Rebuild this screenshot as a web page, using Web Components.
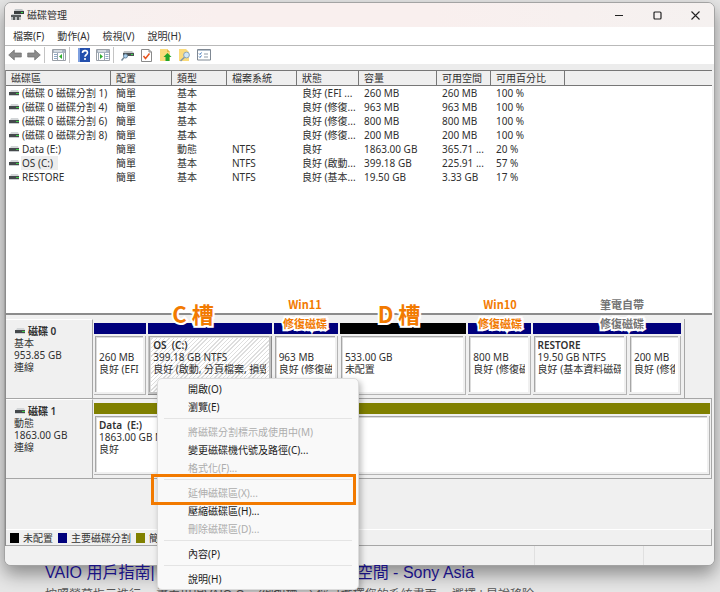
<!DOCTYPE html>
<html lang="zh-Hant">
<head>
<meta charset="utf-8">
<title>磁碟管理</title>
<style>
html, body { margin: 0; height: 100%; }
body {
  background: #e6e6e6;
  overflow: hidden;
  color: #303030;
  font: 10px/12px "Noto Sans", "Noto Sans CJK TC", sans-serif;
  --line: #8c8c8c;
  --soft: #a6a6a6;
  --face: #f0f0f0;
  --navy: #00007c;
  --olive: #808000;
  --mark: #f27a00;
}
</style>
</head>
<body>
<disk-desktop></disk-desktop>

<script>
const define = (name, html, setup) => {
  const template = document.createElement('template');
  template.innerHTML = html;
  customElements.define(name, class extends HTMLElement {
    constructor() {
      super();
      this.attachShadow({ mode: 'open' }).append(template.content.cloneNode(true));
    }
    connectedCallback() { if (setup) setup(this, this.shadowRoot); }
  });
};

/* Small drive glyph used in lists and labels */
define('drive-icon', `
<style>:host{display:inline-block;width:11px;height:6px;flex:none}svg{display:block}</style>
<svg width="11" height="6" viewBox="0 0 11 6" aria-hidden="true">
  <path d="M2 0h7l1 2H1z" fill="#d3d6d8"/><path d="M0 2h10v3H0z" fill="#45494c"/>
  <path d="M0 5h10v1H0z" fill="#c9cdcf"/><path d="M7 3h3v1H7z" fill="#3fc94a"/>
</svg>`);

define('title-bar', `
<style>
:host{display:flex;align-items:center;height:24px;background:linear-gradient(90deg,#f5f1f0,#f9efee 30%,#f9efee 60%,#f5f1f0);padding-left:6px}
h1{margin:0;font:inherit;flex:1;padding-left:3px}
button{width:38px;height:24px;padding:0;border:0;background:none;display:grid;place-items:center;color:#222}
</style>
<svg width="13" height="12" viewBox="0 0 13 12" aria-hidden="true">
  <path d="M4 0h7l2 2H3z" fill="#c3c7c9"/><path d="M3 2h10v3H3z" fill="#3a3e40"/><path d="M10 3h2v1h-2z" fill="#3ddc4a"/>
  <path d="M1 5h8l1 1H0z" fill="#c3c7c9"/><path d="M0 6h10v2H0z" fill="#55595b"/><path d="M0 8h10v3H0z" fill="#b9bdbf"/><path d="M2 8h2v3H2zM6 8h2v3H6z" fill="#55595b"/>
</svg>
<h1>磁碟管理</h1>
<button aria-label="最小化"><svg width="9" height="9"><path d="M0 4.5h8" stroke="currentColor"/></svg></button>
<button aria-label="最大化"><svg width="9" height="9"><rect x="1" y="1" width="7" height="7" rx="1" fill="none" stroke="currentColor" stroke-width="1.2"/></svg></button>
<button aria-label="關閉"><svg width="9" height="9"><path d="M.5.5l8 8M8.500.5l-8 8" stroke="currentColor" stroke-width="1.1"/></svg></button>`);

define('menu-strip', `
<style>
:host{display:flex;gap:13px;align-items:center;height:18px;padding-left:8px;background:#fff;border-bottom:1px solid #b9b9b9}
button{all:unset}
</style>
<button>檔案(F)</button><button>動作(A)</button><button>檢視(V)</button><button>說明(H)</button>`);

define('tool-strip', `
<style>
:host{display:flex;align-items:center;height:18px;background:#fff;border-bottom:6px solid #ececec}
button{border:0;background:none;padding:0;width:19px;height:18px;display:grid;place-items:center}
i{width:1px;height:16px;background:#c4c4c4;margin:0 4px 0 1px}
</style>
<button aria-label="上一頁"><svg width="14" height="12"><path d="M.7 6l5.600-5v3h7v4h-7v3z" fill="#8b8b8b" stroke="#6f6f6f" stroke-width=".7"/></svg></button>
<button aria-label="下一頁"><svg width="14" height="12"><path d="M13.300 6l-5.600-5v3h-7v4h7v3z" fill="#8b8b8b" stroke="#6f6f6f" stroke-width=".7"/></svg></button>
<i></i>
<button aria-label="顯示主控台樹"><svg width="14" height="12"><path d="M.5.5h13v11H.5z" fill="#fff" stroke="#9a9fa6"/><path d="M1 1h12v3H1z" fill="#a9b5c2"/><path d="M2 2h8" stroke="#fff"/><path d="M2 5.500h3M2 7.500h3M2 9.500h3" stroke="#8fa9c6"/><path d="M5.500 4v7.500M11.500 4v7.500" stroke="#9aa5b1"/><path d="M10 5v5L7 7.500z" fill="#2fae2f"/></svg></button>
<i></i>
<button aria-label="說明"><svg width="12" height="14"><rect width="12" height="14" fill="#2450ad"/><path d="M0 0h2v14H0z" fill="#7d9fdf"/><path d="M4.500 5c0-3.200 5-3 5-.2 0 2-2.500 1.900-2.500 4" fill="none" stroke="#fff" stroke-width="1.600"/><circle cx="7" cy="11" r="1.100" fill="#fff"/></svg></button>
<button aria-label="顯示動作窗格"><svg width="14" height="12"><path d="M.5.5h13v11H.5z" fill="#fff" stroke="#9a9fa6"/><path d="M1 1h12v3H1z" fill="#a9b5c2"/><path d="M2 2h8" stroke="#fff"/><path d="M9.500 5.500h3M9.500 7.500h3M9.500 9.500h3" stroke="#8fa9c6"/><path d="M2.500 4v7.500M8.500 4v7.500" stroke="#9aa5b1"/><path d="M4 5v5l3-2.500z" fill="#2fae2f"/></svg></button>
<i></i>
<button aria-label="重新掃描"><svg width="13" height="12"><path d="M3 2h8l2 2H2z" fill="#c0c4c6"/><path d="M2 4h11v3H2z" fill="#4a5053"/><path d="M10 5h2v1h-2z" fill="#3ddc4a"/><circle cx="4.500" cy="7" r="2" fill="#a9d0ee" stroke="#6e8ba3"/><path d="M3 8.500L.5 11.500" stroke="#738797" stroke-width="1.500"/></svg></button>
<button aria-label="內容"><svg width="11" height="13"><path d="M.5.5h7.500l2.500 2.500v9.500H.5z" fill="#fff" stroke="#8a8a8a"/><path d="M8 .5V3h2.500" fill="none" stroke="#8a8a8a"/><path d="M2.500 7l2 2.500L8.500 4.500" fill="none" stroke="#e8541e" stroke-width="1.500"/></svg></button>
<button aria-label="上層"><svg width="12" height="14"><path d="M0 1h7l3 3v9H0z" fill="#fadb7c"/><path d="M7 1l3 3H7z" fill="#e2b84e"/><path d="M7.500 5l4 4h-2v4h-4V9h-2z" fill="#22a52a"/></svg></button>
<button aria-label="尋找"><svg width="13" height="14"><path d="M1 1h7l3 3v9H1z" fill="#fadb7c"/><circle cx="8.500" cy="7" r="2.900" fill="#cfe6f7" stroke="#8ba4b8"/><path d="M6.500 9.300L2.500 13" stroke="#7e97ab" stroke-width="1.500"/></svg></button>
<button aria-label="清單"><svg width="14" height="12"><path d="M.5.5h13v10.500H.5z" fill="#fff" stroke="#7f8893"/><path d="M1 1.500h12" stroke="#b4c0cd"/><path d="M2 4.500l1 1 1.500-2M2 7.500l1 1 1.500-2" fill="none" stroke="#3a72b8"/><path d="M7 5h4M7 8h4" stroke="#8f9aa6"/></svg></button>`);

define('volume-list', `
<style>
:host{display:block;background:#fff;overflow:hidden;flex:1;min-height:120px;border-bottom:2px solid var(--line)}
table{border-collapse:separate;border-spacing:0;table-layout:fixed;width:100%}
th{height:14px;padding:0 0 0 5px;border:solid #777;border-width:1px 1px 1px 0;background:#efefef;font-weight:400;text-align:left;line-height:14px}
th:last-child{border-right:0}
td{height:14px;line-height:14px;padding:0 0 0 5px;white-space:nowrap;overflow:hidden}
td:first-child{padding-left:3px}
drive-icon{margin-right:1px;vertical-align:1px}
span{padding:0 2px 0 1px}
.on{background:#ededed;padding:0 5px 0 1px}
</style>
<table>
<colgroup><col width="105"><col width="61"><col width="55"><col width="70"><col width="62"><col width="78"><col width="54"><col width="74"><col></colgroup>
<thead><tr><th>磁碟區</th><th>配置</th><th>類型</th><th>檔案系統</th><th>狀態</th><th>容量</th><th>可用空間</th><th>可用百分比</th><th></th></tr></thead>
<tbody></tbody></table>`, (host, root) => {
  const rows = [
    ['(磁碟 0 磁碟分割 1)', '簡單', '基本', '', '良好 (EFI ...', '260 MB', '260 MB', '100 %'],
    ['(磁碟 0 磁碟分割 4)', '簡單', '基本', '', '良好 (修復...', '963 MB', '963 MB', '100 %'],
    ['(磁碟 0 磁碟分割 6)', '簡單', '基本', '', '良好 (修復...', '800 MB', '800 MB', '100 %'],
    ['(磁碟 0 磁碟分割 8)', '簡單', '基本', '', '良好 (修復...', '200 MB', '200 MB', '100 %'],
    ['Data (E:)', '簡單', '動態', 'NTFS', '良好', '1863.00 GB', '365.71 ...', '20 %'],
    ['OS (C:)', '簡單', '基本', 'NTFS', '良好 (啟動...', '399.18 GB', '225.91 ...', '57 %'],
    ['RESTORE', '簡單', '基本', 'NTFS', '良好 (基本...', '19.50 GB', '3.33 GB', '17 %']
  ];
  root.querySelector('tbody').innerHTML = rows.map(r => '<tr>' + r.map((c, i) =>
    i ? `<td>${c}</td>` : `<td><drive-icon></drive-icon><span class="${c === 'OS (C:)' ? 'on' : ''}">${c}</span></td>`
  ).join('') + '</tr>').join('');
});

/* One physical disk: label panel plus a track of partitions */
define('disk-row', `
<style>
:host{display:flex;height:79px;border-bottom:1px solid var(--soft)}
header{width:87px;flex:none;box-sizing:border-box;padding:5px 0 0 8px;border-right:1px solid var(--soft);border-top:1px solid #fff}
h2{margin:0;font:inherit;font-weight:600;display:flex;align-items:center;gap:2px}
h2 drive-icon{margin-left:1px}
.track{flex:590;display:flex;gap:2px;box-sizing:border-box;padding:4px 3px 3px 1px;min-width:0;border-right:1px solid var(--soft)}
.spare{flex:27}
:host([full]) .spare{display:none}
:host([full]) .track{padding-right:1px}
</style>
<header><h2><drive-icon></drive-icon><slot name="name"></slot></h2><slot name="info"></slot></header>
<div class="track"><slot></slot></div><div class="spare"></div>`);

define('disk-part', `
<style>
:host{display:flex;flex-direction:column;gap:2px;min-width:0;flex:1 1 0}
.bar{height:11px;background:var(--bar,var(--navy))}
:host([joined]) .bar{margin-right:-2px}
.box{flex:1;min-height:0;border:solid #b4b4b4;border-width:0 1px 1px 0;padding:0 2px 2px 1px}
.in{height:100%;box-sizing:border-box;background:#fff;border:solid var(--soft);border-width:1px 0 0 1px;padding:2px 3px 0 3px;overflow:hidden;white-space:nowrap;box-shadow:inset 1px 1px #dcdcdc}
.clip{overflow:hidden}
:host([selected]) .box{border-color:var(--line);background:#c4c4c4}
:host([selected]) .in{background:repeating-linear-gradient(135deg,#fff 0 2px,#dedede 2px 3px)}
</style>
<div class="bar"></div><div class="box"><div class="in"><div class="clip"><slot></slot></div></div></div>`,
  host => { host.style.flexGrow = host.getAttribute('size'); });

define('part-text', `
<style>:host{display:block}b,div{display:block;height:12px;white-space:pre}b{font-weight:600}</style>
<b></b><div class="s"></div><div class="t"></div>`, (h, r) => {
  r.querySelector('b').textContent = h.getAttribute('name') || '';
  r.querySelector('.s').textContent = h.getAttribute('size');
  r.querySelector('.t').textContent = h.getAttribute('state');
});

define('color-legend', `
<style>
:host{display:flex;align-items:center;height:15px;gap:4px;padding-left:4px;margin-right:1px;border:solid #fff;border-width:1px 0 0;box-shadow:1px 0 var(--soft);border-bottom:1px solid var(--soft)}
i{width:9px;height:10px;background:#000}
span{margin-right:1px}
.n{background:var(--navy)}.o{background:var(--olive)}
</style>
<i></i><span>未配置</span><i class="n"></i><span>主要磁碟分割</span><i class="o"></i><span>簡單磁碟區</span>`);

define('status-strip', `
<style>
:host{display:flex;height:19px;background:#f1f1f1}
div{flex:530;border-right:1px solid #e0e0e0}div+div{flex:108}div:last-child{flex:70;border:0}
</style><div></div><div></div><div></div>`);

define('disk-window', `
<style>
:host{display:flex;flex-direction:column;box-sizing:border-box;margin:0 5px 0 4px;height:calc(100vh - 28px);background:var(--face);border:1px solid #a3a3a3;border-radius:7px;overflow:hidden;box-shadow:0 8px 18px rgba(0,0,0,.4)}
.pane{flex:1;min-height:0;display:flex;flex-direction:column;border-left:1px solid var(--line);margin-right:2px}
.graph{padding-top:4px;height:210px}
</style>
<title-bar></title-bar><menu-strip></menu-strip><tool-strip></tool-strip>
<div class="pane">
  <volume-list></volume-list>
  <div class="graph">
    <disk-row>
      <span slot="name">磁碟 0</span><span slot="info">基本<br>953.85 GB<br>連線</span>
      <disk-part size="52"><part-text size="260 MB" state="良好 (EFI"></part-text></disk-part>
      <disk-part size="123" selected><part-text name="OS  (C:)" size="399.18 GB NTFS" state="良好 (啟動, 分頁檔案, 損毀"></part-text></disk-part>
      <disk-part size="64"><part-text size="963 MB" state="良好 (修復磁碟"></part-text></disk-part>
      <disk-part size="126" style="--bar:#000"><part-text size="533.00 GB" state="未配置"></part-text></disk-part>
      <disk-part size="62"><part-text size="800 MB" state="良好 (修復磁碟"></part-text></disk-part>
      <disk-part size="94" joined><part-text name="RESTORE" size="19.50 GB NTFS" state="良好 (基本資料磁碟"></part-text></disk-part>
      <disk-part size="52"><part-text size="200 MB" state="良好 (修復磁碟"></part-text></disk-part>
    </disk-row>
    <disk-row full>
      <span slot="name">磁碟 1</span><span slot="info">動態<br>1863.00 GB<br>連線</span>
      <disk-part size="1" style="--bar:var(--olive)"><part-text name="Data  (E:)" size="1863.00 GB NTFS" state="良好"></part-text></disk-part>
    </disk-row>
  </div>
  <color-legend></color-legend>
</div>
<status-strip></status-strip>`);

define('menu-entry', `
<style>
:host{display:block}
button{all:unset;display:block;box-sizing:border-box;width:100%;height:18px;line-height:18px;padding-left:30px;color:#1c1c1c}
button:disabled{color:#adadad}
</style><button role="menuitem"><slot></slot></button>`, (h, r) => { r.querySelector('button').disabled = h.hasAttribute('off'); });

define('context-menu', `
<style>
:host{display:block;box-sizing:border-box;width:202px;padding:1px 0;background:#f9f9f9;border:1px solid #dcdcdc;border-radius:5px;box-shadow:2px 3px 6px rgba(0,0,0,.28)}
hr{margin:2px 6px 4px;border:0;height:1px;background:#e4e4e4}
</style>
<div role="menu">
<menu-entry>開啟(O)</menu-entry><menu-entry>瀏覽(E)</menu-entry><hr>
<menu-entry off>將磁碟分割標示成使用中(M)</menu-entry><menu-entry>變更磁碟機代號及路徑(C)...</menu-entry><menu-entry off>格式化(F)...</menu-entry><hr>
<menu-entry off>延伸磁碟區(X)...</menu-entry><menu-entry>壓縮磁碟區(H)...</menu-entry><menu-entry off>刪除磁碟區(D)...</menu-entry><hr>
<menu-entry>內容(P)</menu-entry><hr>
<menu-entry>說明(H)</menu-entry>
</div>`);

/* Outlined annotation laid over the window */
define('note-tag', `
<style>
:host{display:block;position:absolute;transform:translate(-50%,-50%);white-space:nowrap;text-align:center;color:var(--mark);
font:700 11px/19px "Noto Sans CJK TC",sans-serif;-webkit-text-stroke:4px #fff;paint-order:stroke fill}
:host([big]){font-size:22px}
:host([dim]){color:#757575}
</style><slot></slot>`);

define('search-result', `
<style>
:host{display:block;padding-left:45px;white-space:nowrap}
a{display:flex;font:16px/20px "Liberation Sans","Noto Sans CJK TC",sans-serif;color:#1a1283;text-decoration:none;gap:202px}
p{margin:4px 0 0;font:12px/16px "Liberation Sans","Noto Sans CJK TC",sans-serif;color:#555}
</style>
<a href="#"><span>VAIO 用戶指南|</span><span>空間 - Sony Asia</span></a>
<p>按照螢幕指示進行。 畫面出現VAIO C... (例如標示) 您可選擇您的系統畫面。 選擇 | 是說移除</p>`);

define('disk-desktop', `
<style>
:host{display:block;position:relative;box-sizing:border-box;height:100vh;padding-top:2px;overflow:hidden}
search-result{margin-top:-3px}
context-menu{position:absolute;left:157px;top:378px}
.ring{position:absolute;left:151px;top:474px;width:205px;height:31px;box-sizing:border-box;border:3px solid var(--mark)}
</style>
<disk-window></disk-window>
<search-result></search-result>
<note-tag big style="left:193px;top:313px">C 槽</note-tag>
<note-tag style="left:305px;top:314px">Win11<br>修復磁碟</note-tag>
<note-tag big style="left:399px;top:313px">D 槽</note-tag>
<note-tag style="left:500px;top:314px">Win10<br>修復磁碟</note-tag>
<note-tag dim style="left:622px;top:314px">筆電自帶<br>修復磁碟</note-tag>
<context-menu></context-menu>
<div class="ring"></div>`);
</script>
</body>
</html>
